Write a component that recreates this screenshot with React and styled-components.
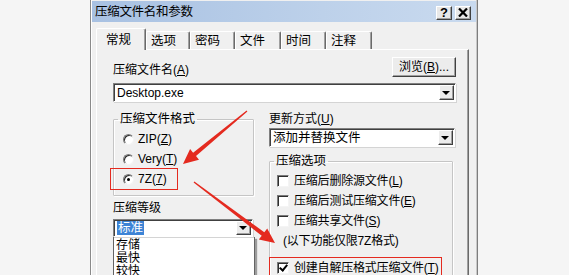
import styled, { createGlobalStyle } from "styled-components";

const GlobalStyle = createGlobalStyle`
	html, body {
		margin: 0;
		padding: 0;
		background: #f5f5f5;
		overflow: hidden;
	}
	* {
		box-sizing: border-box;
	}
`;

const FONT = `"Liberation Sans", "Noto Sans CJK SC", sans-serif`;

const RED = "#e42a1f";

// tapered arrow shape from tail to tip
const arrowPoints = (tx, ty, hx, hy) => {
	const dx = hx - tx;
	const dy = hy - ty;
	const len = Math.sqrt(dx * dx + dy * dy);
	const ux = dx / len;
	const uy = dy / len;
	const nx = -uy;
	const ny = ux;
	const headLen = 15;
	const headW = 7;
	const bx = hx - ux * headLen;
	const by = hy - uy * headLen;
	const pts = [
		[tx + nx * 0.6, ty + ny * 0.6],
		[bx + nx * 2.2, by + ny * 2.2],
		[bx + nx * headW, by + ny * headW],
		[hx, hy],
		[bx - nx * headW, by - ny * headW],
		[bx - nx * 2.2, by - ny * 2.2],
		[tx - nx * 0.6, ty - ny * 0.6],
	];
	return pts.map((p) => p.map((v) => v.toFixed(1)).join(",")).join(" ");
};

const App = () => {
	return (
		<>
			<GlobalStyle />
			<Page>
				<Dialog>
					<TitleBar>
						<Title>压缩文件名和参数</Title>
						<TitleButtons>
							<CapButton>?</CapButton>
							<CapButton>
								<svg width="10" height="9" viewBox="0 0 10 9">
									<path d="M1 0.5 L9 8.5 M9 0.5 L1 8.5" stroke="#000" strokeWidth="2.2" />
								</svg>
							</CapButton>
						</TitleButtons>
					</TitleBar>

					<DialogBody>
						<TabStrip>
							<Tab $active $w={50}>常规</Tab>
							<Tab $w={44}>选项</Tab>
							<Tab $w={45}>密码</Tab>
							<Tab $w={46}>文件</Tab>
							<Tab $w={45}>时间</Tab>
							<Tab $w={46}>注释</Tab>
						</TabStrip>

						<Panel>
							<TopRow>
								<Label>
									压缩文件名(<u>A</u>)
								</Label>
								<PushButton>
									浏览(<u>B</u>)...
								</PushButton>
							</TopRow>

							<Combo $w={343} $h={19} $mt={6}>
								<ComboText $latin>Desktop.exe</ComboText>
								<DropButton />
							</Combo>

							<Columns>
								<Column>
									<GroupBox>
										<Legend>压缩文件格式</Legend>
										<RadioRow>
											<Radio />
											<span>
												ZIP(<u>Z</u>)
											</span>
										</RadioRow>
										<RadioRow>
											<Radio />
											<span>
												Very(<u>T</u>)
											</span>
										</RadioRow>
										<RadioRow $highlight>
											<Radio $checked />
											<span>
												7Z(<u>7</u>)
											</span>
										</RadioRow>
									</GroupBox>

									<Label $mt={5}>压缩等级</Label>
									<Combo $w={140} $h={18} $mt={4}>
										<ComboText>
											<Selected>标准</Selected>
										</ComboText>
										<DropButton />
									</Combo>
									<DropList>
										<ListItem>存储</ListItem>
										<ListItem>最快</ListItem>
										<ListItem>较快</ListItem>
									</DropList>
								</Column>

								<Column>
									<Label>
										更新方式(<u>U</u>)
									</Label>
									<Combo $w={186} $h={19} $mt={2}>
										<ComboText>添加并替换文件</ComboText>
										<DropButton />
									</Combo>

									<GroupBox $mt={7} $w={184}>
										<Legend>压缩选项</Legend>
										<CheckRow>
											<Check />
											<span>
												压缩后删除源文件(<u>L</u>)
											</span>
										</CheckRow>
										<CheckRow>
											<Check />
											<span>
												压缩后测试压缩文件(<u>E</u>)
											</span>
										</CheckRow>
										<CheckRow>
											<Check />
											<span>
												压缩共享文件(<u>S</u>)
											</span>
										</CheckRow>
										<Note>(以下功能仅限7Z格式)</Note>
										<CheckRow $highlight>
											<Check $checked />
											<span>
												创建自解压格式压缩文件(<u>T</u>)
											</span>
										</CheckRow>
									</GroupBox>
								</Column>
							</Columns>
						</Panel>
					</DialogBody>
				</Dialog>

				<Annotations width="569" height="275" viewBox="0 0 569 275">
					<polygon points={arrowPoints(247, 111, 183, 164)} fill={RED} />
					<polygon points={arrowPoints(194, 182, 275, 243)} fill={RED} />
				</Annotations>
			</Page>
		</>
	);
};

export default App;

const Page = styled.div`
	position: relative;
	width: 569px;
	height: 275px;
	overflow: hidden;
	padding-left: 90px;
	font-family: ${FONT};
	font-size: 12px;
	color: #000;
	white-space: nowrap;
`;

const Dialog = styled.div`
	width: 388px;
	height: 300px;
	background: #f0f0f0;
	border-left: 1px solid #8a8a8a;
	border-right: 1px solid #7d7d7d;
	box-shadow: inset 1px 0 0 #ffffff, inset -1px 0 0 #c8c8c8;
	padding-top: 1px;
`;

const TitleBar = styled.div`
	height: 21px;
	margin: 0 1px;
	display: flex;
	align-items: center;
	justify-content: space-between;
	padding: 0 5px 0 3px;
	background: linear-gradient(to right, #a8c1e2, #bdd1ea 60%, #c9daef);
`;

const Title = styled.div`
	font-size: 12.5px;
	letter-spacing: -0.3px;
	line-height: 14px;
`;

const TitleButtons = styled.div`
	display: flex;
	gap: 3px;
	margin-top: 2px;
`;

const CapButton = styled.div`
	width: 16px;
	height: 14px;
	display: flex;
	align-items: center;
	justify-content: center;
	background: #e8e8e8;
	border-top: 1px solid #ffffff;
	border-left: 1px solid #ffffff;
	border-right: 1px solid #404040;
	border-bottom: 1px solid #404040;
	box-shadow: inset -1px -1px 0 #a0a0a0;
	font-family: "Liberation Sans", sans-serif;
	font-weight: 700;
	font-size: 13px;
	line-height: 12px;
`;

const DialogBody = styled.div`
	padding: 5px 0 0 5px;
`;

const TabStrip = styled.div`
	display: flex;
	align-items: flex-end;
	height: 22px;
	position: relative;
	z-index: 1;
`;

const Tab = styled.div`
	width: ${(p) => p.$w}px;
	height: ${(p) => (p.$active ? 22 : 18)}px;
	margin-bottom: ${(p) => (p.$active ? -1 : 0)}px;
	padding-left: ${(p) => (p.$active ? 9 : 4)}px;
	padding-top: ${(p) => (p.$active ? 4 : 2)}px;
	line-height: 14px;
	font-size: 12.5px;
	background: #f0f0f0;
	border-top: 1px solid #ffffff;
	border-left: 1px solid #ffffff;
	border-right: 1px solid #6a6a6a;
	box-shadow: inset -1px 0 0 #a0a0a0;
	border-top-left-radius: 2px;
	border-top-right-radius: 2px;
`;

const Panel = styled.div`
	width: 373px;
	height: 260px;
	border-top: 1px solid #ffffff;
	border-left: 1px solid #ffffff;
	border-right: 1px solid #6a6a6a;
	box-shadow: inset -1px 0 0 #a0a0a0;
	padding: 7px 12px 0 16px;
`;

const TopRow = styled.div`
	display: flex;
	justify-content: space-between;
	align-items: flex-end;
	height: 20px;
`;

const Label = styled.div`
	line-height: 14px;
	margin-top: ${(p) => p.$mt || 0}px;

	u {
		text-decoration: underline;
	}
`;

const PushButton = styled.div`
	width: 64px;
	height: 20px;
	display: flex;
	align-items: center;
	justify-content: center;
	background: #ececec;
	border-top: 1px solid #ffffff;
	border-left: 1px solid #ffffff;
	border-right: 1px solid #404040;
	border-bottom: 1px solid #404040;
	box-shadow: inset -1px -1px 0 #a0a0a0;
	line-height: 14px;
`;

const Combo = styled.div`
	position: relative;
	width: ${(p) => p.$w}px;
	height: ${(p) => p.$h}px;
	margin-top: ${(p) => p.$mt || 0}px;
	background: #ffffff;
	border-top: 1px solid #808080;
	border-left: 1px solid #808080;
	border-right: 1px solid #ffffff;
	border-bottom: 1px solid #ffffff;
	box-shadow: inset 1px 1px 0 #404040, 1px 1px 0 #d4d4d4;
	display: flex;
	align-items: center;
	justify-content: space-between;
	padding: 1px 1px 1px 3px;
`;

const ComboText = styled.div`
	line-height: 14px;
	font-size: ${(p) => (p.$latin ? 12 : 12.5)}px;
`;

const Selected = styled.span`
	background: #3d84d6;
	color: #ffffff;
	padding: 0 1px;
`;

const DropButton = styled.div`
	width: 15px;
	height: 100%;
	background: #ececec;
	border-top: 1px solid #ffffff;
	border-left: 1px solid #ffffff;
	border-right: 1px solid #404040;
	border-bottom: 1px solid #404040;
	box-shadow: inset -1px -1px 0 #a0a0a0;
	display: flex;
	align-items: center;
	justify-content: center;

	&::after {
		content: "";
		border-left: 4px solid transparent;
		border-right: 4px solid transparent;
		border-top: 4px solid #000;
		margin-left: -1px;
	}
`;

const Columns = styled.div`
	display: grid;
	grid-template-columns: 141px 186px;
	column-gap: 15px;
	margin-top: 10px;
`;

const Column = styled.div`
	display: flex;
	flex-direction: column;
	align-items: flex-start;
`;

const GroupBox = styled.fieldset`
	margin: ${(p) => p.$mt || 0}px 0 0 0;
	width: ${(p) => p.$w || 141}px;
	min-width: 0;
	height: ${(p) => (p.$w ? 140 : 84)}px;
	padding: 3px 0 0 0;
	border: 1px solid #c5c5c5;
	box-shadow: 1px 1px 0 #ffffff, inset 1px 1px 0 #ffffff;
	border-radius: 1px;
	display: flex;
	flex-direction: column;
	align-items: flex-start;
	overflow: visible;
`;

const Legend = styled.legend`
	padding: 0 2px;
	margin-left: 4px;
	line-height: 14px;
	font-size: 12.5px;
`;

const RadioRow = styled.div`
	display: flex;
	align-items: center;
	gap: 4px;
	width: 66px;
	height: 20px;
	margin-left: -3px;
	padding-left: 12px;
	line-height: 14px;
	outline: ${(p) => (p.$highlight ? `1px solid ${RED}` : "none")};
	outline-offset: 0;
`;

const Radio = styled.span`
	position: relative;
	width: 11px;
	height: 11px;
	border-radius: 50%;
	background: #ffffff;
	border-top: 1px solid #7a7a7a;
	border-left: 1px solid #7a7a7a;
	border-right: 1px solid #f4f4f4;
	border-bottom: 1px solid #f4f4f4;
	box-shadow: inset 1px 1px 0 #2e2e2e;
	flex-shrink: 0;

	&::after {
		content: "";
		display: ${(p) => (p.$checked ? "block" : "none")};
		position: absolute;
		left: 3px;
		top: 3px;
		width: 3px;
		height: 3px;
		border-radius: 50%;
		background: #000;
	}
`;

const CheckRow = styled.div`
	display: flex;
	align-items: center;
	gap: 5px;
	width: 171px;
	height: 20px;
	padding-left: 7px;
	margin-top: ${(p) => (p.$highlight ? 7 : 0)}px;
	line-height: 14px;
	letter-spacing: -0.2px;
	outline: ${(p) => (p.$highlight ? `1px solid ${RED}` : "none")};
`;

const Check = styled.span`
	position: relative;
	width: 12px;
	height: 12px;
	background: #ffffff;
	border-top: 1px solid #7a7a7a;
	border-left: 1px solid #7a7a7a;
	border-right: 1px solid #f4f4f4;
	border-bottom: 1px solid #f4f4f4;
	box-shadow: inset 1px 1px 0 #2e2e2e;
	flex-shrink: 0;

	&::after {
		content: "";
		display: ${(p) => (p.$checked ? "block" : "none")};
		position: absolute;
		left: 3px;
		top: 0px;
		width: 3px;
		height: 6px;
		border-right: 2px solid #000;
		border-bottom: 2px solid #000;
		transform: rotate(40deg);
	}
`;

const Note = styled.div`
	height: 20px;
	display: flex;
	align-items: center;
	padding-left: 13px;
	line-height: 14px;
	letter-spacing: -0.2px;
`;

const DropList = styled.div`
	width: 142px;
	height: 50px;
	background: #ffffff;
	border: 1px solid #646464;
	box-shadow: 2px 2px 1px rgba(0, 0, 0, 0.35);
	padding: 1px 0 0 2px;
`;

const ListItem = styled.div`
	font-size: 12px;
	line-height: 13px;
	height: 13px;
`;

const Annotations = styled.svg`
	position: absolute;
	left: 0;
	top: 0;
	pointer-events: none;
`;
